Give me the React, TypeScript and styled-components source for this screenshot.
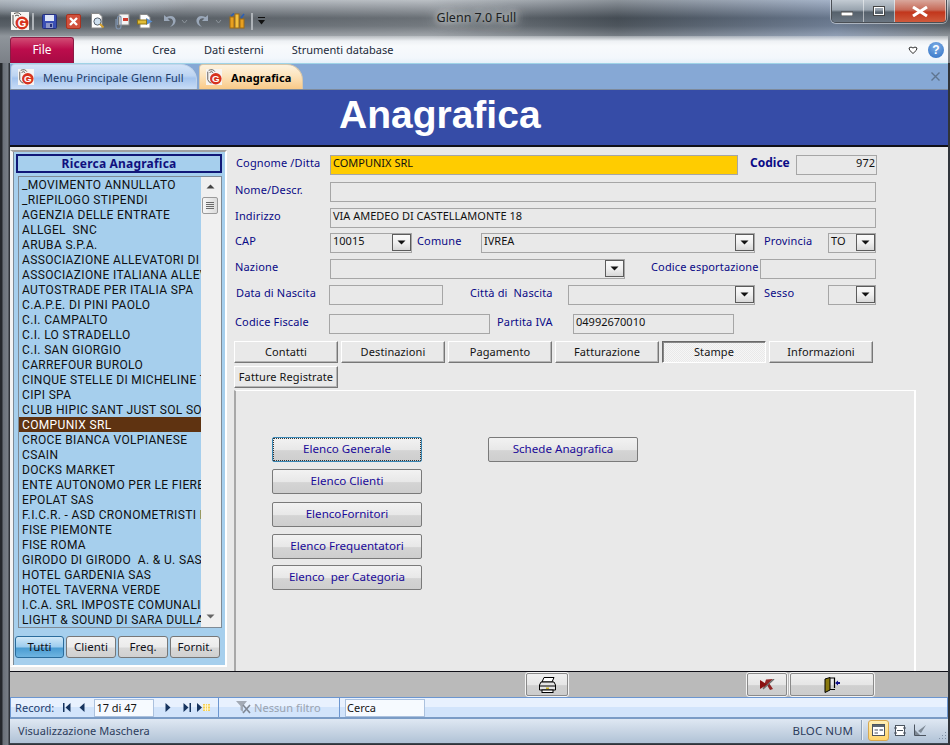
import styled, { createGlobalStyle } from "styled-components";

const GlobalStyle = createGlobalStyle`
  html, body { margin: 0; padding: 0; background: #33373c; }
  * { box-sizing: border-box; }
  body { font-family: "Noto Sans", "Liberation Sans", sans-serif; font-size: 11px; }
`;

const clients = [
  "_MOVIMENTO ANNULLATO", "_RIEPILOGO STIPENDI", "AGENZIA DELLE ENTRATE", "ALLGEL  SNC", "ARUBA S.P.A.",
  "ASSOCIAZIONE ALLEVATORI DI", "ASSOCIAZIONE ITALIANA ALLEV", "AUTOSTRADE PER ITALIA SPA", "C.A.P.E. DI PINI PAOLO",
  "C.I. CAMPALTO", "C.I. LO STRADELLO", "C.I. SAN GIORGIO", "CARREFOUR BUROLO", "CINQUE STELLE DI MICHELINE T",
  "CIPI SPA", "CLUB HIPIC SANT JUST SOL SOL", "COMPUNIX SRL", "CROCE BIANCA VOLPIANESE", "CSAIN", "DOCKS MARKET",
  "ENTE AUTONOMO PER LE FIERE", "EPOLAT SAS", "F.I.C.R. - ASD CRONOMETRISTI DI", "FISE PIEMONTE", "FISE ROMA",
  "GIRODO DI GIRODO  A. & U. SAS", "HOTEL GARDENIA SAS", "HOTEL TAVERNA VERDE", "I.C.A. SRL IMPOSTE COMUNALI DI",
  "LIGHT & SOUND DI SARA DULLA",
];

const Page = styled.div`
  width: 950px;
  height: 745px;
  overflow: hidden;
  display: flex;
  flex-direction: column;
  background: linear-gradient(90deg, #25282c 0, #25282c 2px, #6a7078 3px, #777d85 8px, #30343a 9px, #30343a 10px);
`;

const Chrome = styled.div`
  height: 63px;
  padding: 0 2px 0 10px;
  background:
    radial-gradient(ellipse 120px 14px at 70px 4px, rgba(200, 215, 230, 0.5), transparent),
    linear-gradient(90deg, transparent 0, rgba(255, 255, 255, 0.1) 30%, rgba(255, 255, 255, 0.16) 45%, rgba(40, 50, 60, 0.25) 65%, rgba(150, 180, 230, 0.35) 88%, transparent 100%),
    linear-gradient(180deg, #aeb4ba 0, #8e949b 6px, #4e555c 18px, #5a6168 26px, #8f959b 36px, #7b8087 63px);
`;

const TitleBar = styled.div`
  height: 36px;
  display: flex;
  align-items: flex-start;
  margin-right: 1px;
`;

const QuickBar = styled.div`
  width: 427px;
  height: 36px;
  padding: 6px 0 0 1px;
  display: flex;
  align-items: center;
  align-self: flex-start;
`;

const QuickSlot = styled.span<{ $w: number }>`
  width: ${(p) => p.$w}px;
  height: 20px;
  flex: none;
  display: flex;
  align-items: center;
  justify-content: center;
`;

const Title = styled.div`
  width: 395px;
  padding-top: 9px;
  color: #1c1f22;
  font-size: 12.5px;
  line-height: 18px;
  text-shadow: 0 0 6px #eceeef, 0 0 12px #e2e4e6, 0 0 18px #dadcde;
`;

const WinControls = styled.div`
  display: flex;
  width: 116px;
  height: 23px;
  border: 1px solid #4a4f55;
  border-top: 0;
  border-radius: 0 0 5px 5px;
  overflow: hidden;
  box-shadow: 0 0 0 1px rgba(255, 255, 255, 0.45);
`;

const WinButton = styled.span<{ $w: number; $close?: boolean }>`
  width: ${(p) => p.$w}px;
  display: flex;
  align-items: center;
  justify-content: center;
  border-right: 1px solid rgba(255, 255, 255, 0.5);
  background: ${(p) =>
    p.$close
      ? "linear-gradient(180deg, #d9a79c 0, #c66a58 45%, #c2361c 55%, #cf5a3c 100%)"
      : "linear-gradient(180deg, #c3cbd3 0, #98a3ae 45%, #56616c 55%, #6b7682 100%)"};
`;

const RibbonTabs = styled.div`
  height: 27px;
  display: flex;
  align-items: center;
  background: linear-gradient(180deg, rgba(216, 220, 223, 0.4) 0, #eef1f4 5px, #f8fafc 10px, #f3f7fc 22px, #e6f0f9 27px);
`;

const FileTab = styled.div`
  width: 64px;
  height: 26px;
  margin-top: 1px;
  border: 1px solid #8a1c44;
  border-bottom: 0;
  border-radius: 3px 3px 0 0;
  background: linear-gradient(180deg, #d24c74 0, #bc0d4c 45%, #a80a44 100%);
  color: #fff;
  font-size: 12px;
  display: flex;
  align-items: center;
  justify-content: center;
  padding-bottom: 3px;
`;

const RibbonTab = styled.span<{ $ml: number }>`
  margin-left: ${(p) => p.$ml}px;
  color: #222a3a;
  font-size: 11px;
`;

const RibbonRight = styled.div`
  margin-left: auto;
  margin-right: 4px;
  display: flex;
  align-items: center;
  gap: 10px;
`;

const Help = styled.span`
  width: 16px;
  height: 16px;
  border-radius: 50%;
  background: radial-gradient(circle at 50% 30%, #7eaee6, #2f70c4);
  color: #fff;
  font: bold 12px/16px "Liberation Sans", sans-serif;
  text-align: center;
`;

const Window = styled.div`
  flex: 1;
  margin-left: 10px;
  margin-right: 2px;
  margin-bottom: 1px;
  min-height: 0;
  display: flex;
  flex-direction: column;
  background: #e9e9e9;
`;

const DocTabs = styled.div`
  height: 27px;
  background: #86a8d5;
  border-top: 1px solid #9fd3e6;
  border-bottom: 1px solid #7d8a9c;
  display: flex;
  align-items: flex-end;
  padding-left: 1px;
  gap: 2px;
`;

const DocTab = styled.div<{ $active?: boolean; $w: number }>`
  width: ${(p) => p.$w}px;
  height: 25px;
  border: 1px solid ${(p) => (p.$active ? "#d8c6a8" : "#c2d4ea")};
  border-bottom: 0;
  border-radius: 4px 16px 0 0;
  padding-left: 6px;
  display: flex;
  align-items: center;
  gap: 9px;
  color: ${(p) => (p.$active ? "#000" : "#1e3a66")};
  font-weight: ${(p) => (p.$active ? 700 : 400)};
  font-size: 11px;
  letter-spacing: 0.1px;
  background: ${(p) =>
    p.$active
      ? "linear-gradient(180deg, #fdf2df 0, #fce4bd 45%, #f9c987 100%)"
      : "linear-gradient(180deg, #d4e4f8 0, #bcd4f2 45%, #a4c4ee 55%, #c8dcf6 100%)"};
`;

const DocClose = styled.span`
  margin-left: auto;
  margin-right: 8px;
  align-self: center;
  display: flex;
`;

const Banner = styled.div`
  height: 57px;
  background: #364ca7;
  border-bottom: 2px solid #101018;
  padding-left: 329px;
  color: #fff;
  font: bold 39px/50px "Liberation Sans", sans-serif;
`;

const Body = styled.div`
  flex: 1;
  min-height: 0;
  display: flex;
`;

const Sidebar = styled.div`
  width: 218px;
  padding: 3px 1px 4px 0;
  display: flex;
`;

const SidePanel = styled.div`
  width: 100%;
  padding: 2px 3px 0 3px;
  border: 2px solid #fff;
  border-left: 3px solid #f4f4f4;
  border-top-color: #a0a0a0;
  box-shadow: inset 1px 0 0 #7c8a96;
  background: #a6cfed;
  display: flex;
  flex-direction: column;
`;

const SideTitle = styled.div`
  height: 19px;
  margin: 0 0 3px 0;
  border: 2px solid #101878;
  color: #10107e;
  font-weight: 700;
  font-size: 12px;
  letter-spacing: 0.2px;
  line-height: 15px;
  text-align: center;
`;

const ListBox = styled.div`
  height: 452px;
  margin-left: 2px;
  border: 1px solid #7f8b96;
  display: flex;
  overflow: hidden;
`;

const ListRows = styled.div`
  flex: 1;
  min-width: 0;
  overflow: hidden;
`;

const ListRow = styled.div<{ $selected?: boolean }>`
  height: 15px;
  padding-left: 3px;
  font-family: Roboto, "Noto Sans", sans-serif;
  font-size: 12px;
  letter-spacing: 0.35px;
  line-height: 17px;
  white-space: pre;
  overflow: hidden;
  color: ${(p) => (p.$selected ? "#fff" : "#101010")};
  background: ${(p) => (p.$selected ? "#5f3311" : "transparent")};
`;

const Scrollbar = styled.div`
  width: 20px;
  background: #f0f0f0;
  display: flex;
  flex-direction: column;
  align-items: center;
  padding: 7px 2px 8px 0;
`;

const Thumb = styled.div`
  width: 16px;
  height: 17px;
  margin-top: 8px;
  margin-bottom: auto;
  border: 1px solid #9a9a9a;
  border-radius: 2px;
  background: linear-gradient(90deg, #f6f6f6, #dcdcdc);
  display: flex;
  flex-direction: column;
  align-items: center;
  justify-content: center;
  gap: 1px;
`;

const Grip = styled.i`
  width: 8px;
  height: 1px;
  background: #6a6a6a;
`;

const FilterRow = styled.div`
  margin-top: 8px;
  margin-left: -1px;
  display: flex;
  gap: 2px;
`;

const FilterButton = styled.div<{ $active?: boolean }>`
  width: ${(p) => (p.$active ? 49 : 50)}px;
  height: 22px;
  border: 1px solid ${(p) => (p.$active ? "#2a6c9c" : "#777")};
  border-radius: 3px;
  color: #101018;
  font-size: 11.5px;
  line-height: 19px;
  text-align: center;
  background: ${(p) =>
    p.$active
      ? "linear-gradient(180deg, #d0e8f8 0, #9cccee 50%, #4a9cd2 55%, #6fb4e0 100%)"
      : "linear-gradient(180deg, #f2f2f2 0, #ebebeb 50%, #d8d8d8 55%, #d0d0d0 100%)"};
`;

const Main = styled.div`
  flex: 1;
  min-width: 0;
  padding-top: 8px;
  padding-left: 7px;
  display: flex;
  flex-direction: column;
`;

const FormRow = styled.div<{ $mb: number }>`
  height: 20px;
  margin-bottom: ${(p) => p.$mb}px;
  display: flex;
  align-items: flex-start;
`;

const Label = styled.span<{ $w: number; $pl?: number; $bold?: boolean }>`
  width: ${(p) => p.$w}px;
  padding-left: ${(p) => p.$pl ?? 0}px;
  margin-top: -1px;
  flex: none;
  color: #0a0a86;
  font-size: ${(p) => (p.$bold ? 12 : 11)}px;
  letter-spacing: ${(p) => (p.$bold ? 0 : 0.15)}px;
  font-weight: ${(p) => (p.$bold ? 700 : 400)};
  line-height: 18px;
  white-space: pre;
`;

const Field = styled.div<{ $w: number; $fill?: string; $right?: boolean }>`
  width: ${(p) => p.$w}px;
  height: 20px;
  flex: none;
  position: relative;
  border: 1.5px solid #a6a6a6;
  background: ${(p) => p.$fill ?? "#e9e9e9"};
  color: #111;
  font-size: 11px;
  line-height: 14px;
  padding: 0 ${(p) => (p.$right ? "1px" : "2px")};
  text-align: ${(p) => (p.$right ? "right" : "left")};
  white-space: pre;
`;

const ComboArrow = styled.span`
  position: absolute;
  right: 0;
  top: 0;
  width: 19px;
  height: 17px;
  border: 1px solid #5c5c5c;
  background: linear-gradient(180deg, #fafafa 0, #f0f0f0 50%, #d8d8d8 100%);
  display: flex;
  align-items: center;
  justify-content: center;
`;

const TabGrid = styled.div`
  width: 660px;
  margin-left: -1px;
  display: flex;
  flex-wrap: wrap;
  gap: 3px;
`;

const TabButton = styled.div<{ $pressed?: boolean }>`
  width: 104px;
  height: 22px;
  font-size: 11px;
  letter-spacing: 0.1px;
  line-height: 19px;
  text-align: center;
  color: #141414;
  white-space: nowrap;
  background: #e9e9e9;
  border: 1px solid;
  border-color: ${(p) => (p.$pressed ? "#6a6a6a #fff #fff #6a6a6a" : "#fff #777 #777 #fff")};
  box-shadow: ${(p) => (p.$pressed ? "inset 1px 1px 0 #888" : "inset -1px -1px 0 #b5b5b5")};
  ${(p) => p.$pressed && "background: repeating-conic-gradient(#e9e9e9 0 25%, #f6f6f6 0 50%) 0 0 / 2px 2px;"}
`;

const Panel = styled.div`
  flex: 1;
  width: 682px;
  margin-top: 2px;
  margin-left: -1px;
  border-top: 1px solid #fff;
  border-left: 2px solid #a8a8a8;
  border-right: 2px solid #fff;
  padding: 46px 0 0 36px;
  display: flex;
  gap: 66px;
`;

const PanelCol = styled.div`
  width: 150px;
  display: flex;
  flex-direction: column;
`;

const PrintButton = styled.div<{ $focus?: boolean; $mb?: number }>`
  position: relative;
  width: 150px;
  height: 25px;
  margin-bottom: ${(p) => p.$mb ?? 0}px;
  border: 1px solid ${(p) => (p.$focus ? "#3a87b4" : "#7a7a7a")};
  border-radius: 2px;
  color: #1a0a98;
  font-size: 11.6px;
  line-height: 22px;
  text-align: center;
  white-space: pre;
  background: linear-gradient(180deg, #f2f2f2 0, #e8e8e8 50%, #d4d4d4 55%, #cecece 100%);
  ${(p) => p.$focus && "outline: 1px dotted #333; outline-offset: -2px;"}
`;

const CommandBar = styled.div`
  height: 26px;
  background: #bababa;
  border-top: 1px solid #101018;
  display: flex;
  padding-left: 515px;
`;

const CommandButton = styled.div<{ $w: number; $ml: number }>`
  width: ${(p) => p.$w}px;
  height: 25px;
  margin-left: ${(p) => p.$ml}px;
  border: 1px solid #f4f4f4;
  outline: 1px solid #8a8a8a;
  outline-offset: -2px;
  border-radius: 3px;
  background: linear-gradient(180deg, #f0f0f0 0, #e6e6e6 50%, #d0d0d0 55%, #cccccc 100%);
  display: flex;
  align-items: center;
  justify-content: center;
`;

const RecordBar = styled.div`
  height: 22px;
  border: 1px solid #6c96d0;
  border-bottom: 2px solid #7b9cc6;
  background: linear-gradient(180deg, #e8f1fe 0, #e8f1fe 45%, #d2e4fb 50%, #d2e4fb 100%);
  display: flex;
  align-items: center;
  color: #25406e;
`;

const RecSection = styled.div<{ $w: number; $pl: number }>`
  width: ${(p) => p.$w}px;
  height: 100%;
  padding-left: ${(p) => p.$pl}px;
  border-right: 1px solid #6c96d0;
  display: flex;
  align-items: center;
  flex: none;
`;

const RecText = styled.span<{ $muted?: boolean }>`
  font-size: 11px;
  letter-spacing: 0.05px;
  margin-right: 9px;
  color: ${(p) => (p.$muted ? "#9aa3b0" : "#25406e")};
`;

const RecInput = styled.div<{ $w: number; $ml?: number }>`
  width: ${(p) => p.$w}px;
  height: 18px;
  margin-left: ${(p) => p.$ml ?? 0}px;
  border: 1px solid #abc1de;
  background: #f6faff;
  color: #151515;
  font-size: 11px;
  line-height: 15px;
  padding-left: 1px;
`;

const NavIcon = styled.span<{ $w: number }>`
  width: ${(p) => p.$w}px;
  flex: none;
  display: flex;
  justify-content: center;
`;

const StatusBar = styled.div`
  height: 25px;
  padding: 0 0 2px 8px;
  border-bottom: 1px solid #3d4650;
  background: linear-gradient(180deg, #dfe8f3 0, #c8d5e4 50%, #b0c2d6 100%);
  display: flex;
  align-items: center;
  color: #2c3c5c;
  font-size: 11px;
  letter-spacing: 0.05px;
`;

const StatusRight = styled.div`
  margin-left: auto;
  display: flex;
  align-items: center;
  height: 100%;
  font-size: 11.5px;
`;

const ViewButton = styled.span<{ $active?: boolean }>`
  width: 21px;
  height: 21px;
  border: 1px solid ${(p) => (p.$active ? "#d8a850" : "transparent")};
  border-radius: 3px;
  background: ${(p) => (p.$active ? "linear-gradient(180deg, #fff0b8, #ffd56c)" : "transparent")};
  display: flex;
  align-items: center;
  justify-content: center;
`;

const StatusDivider = styled.i`
  width: 2px;
  height: 20px;
  margin: 0 5px 0 8px;
  background: #8fa2b8;
  border-right: 1px solid #e8eef5;
`;

const GripCorner = styled.span`
  margin: auto 1px 0 6px;
  display: flex;
`;

const Arrow = ({ color = "#111", up = false }: { color?: string; up?: boolean }) => (
  <svg width="9" height="5" viewBox="0 0 9 5">
    <path d={up ? "M4.5 0.5 L8.5 4.5 H0.5Z" : "M0.5 0.5 H8.5 L4.5 4.5Z"} fill={color} />
  </svg>
);

const AppIcon = ({ size = 18 }: { size?: number }) => (
  <svg width={size} height={size} viewBox="0 0 18 18">
    <rect width="18" height="18" fill="#f6f4f2" />
    <path d="M3 1.5 Q8 -0.5 10 3 M2 3 L2 12 Q3 15 6 16 M4 4 Q6 2 8 4" fill="none" stroke="#55504c" strokeWidth="1" />
    <circle cx="11" cy="11" r="6.5" fill="#d6321e" />
    <text x="11" y="15" textAnchor="middle" fontSize="11" fontWeight="700" fontFamily="Liberation Sans" fill="#fff">G</text>
  </svg>
);

const Drop = () => (
  <svg width="7" height="5" viewBox="0 0 7 5">
    <path d="M1 1 L3.5 4 L6 1" fill="none" stroke="#8d949b" />
  </svg>
);

const SaveIcon = () => (
  <svg width="15" height="15" viewBox="0 0 15 15">
    <rect x="0.5" y="0.5" width="14" height="14" rx="1" fill="#3a4fb5" stroke="#26307a" />
    <rect x="3" y="1" width="9" height="6" fill="#dfe6f7" />
    <rect x="4" y="9" width="7" height="5" fill="#8c96c8" />
    <rect x="8" y="10" width="2" height="3" fill="#26307a" />
  </svg>
);

const CloseIcon = () => (
  <svg width="15" height="15" viewBox="0 0 15 15">
    <rect x="0.5" y="0.5" width="14" height="14" rx="1.5" fill="#d0503c" stroke="#a8321f" />
    <path d="M4 4 L11 11 M11 4 L4 11" stroke="#fff" strokeWidth="2.4" />
  </svg>
);

const PreviewIcon = () => (
  <svg width="15" height="16" viewBox="0 0 15 16">
    <path d="M1.5 0.5 H9 L12 3.5 V15 H1.5Z" fill="#fff" stroke="#8a8a8a" />
    <circle cx="7.5" cy="8.5" r="3.6" fill="#cfe0ef" stroke="#56606c" />
    <path d="M10 11 L13.5 14.5" stroke="#d4a030" strokeWidth="2" />
  </svg>
);

const AttachIcon = () => (
  <svg width="17" height="17" viewBox="0 0 17 17">
    <rect x="6" y="1" width="10" height="11" fill="#f4f4f4" stroke="#8a8a8a" />
    <rect x="10" y="5" width="5" height="3" fill="#cc3b2e" />
    <path d="M3 6 V13 Q3 16 5.5 16 Q8 16 8 13 V5 Q8 3 6 3 Q4.5 3 4.5 5 V12" fill="none" stroke="#7f93ad" strokeWidth="1.2" />
  </svg>
);

const ExportIcon = () => (
  <svg width="16" height="15" viewBox="0 0 16 15">
    <path d="M3 0.5 H10 L13 3.5 V14 H3Z" fill="#fff" stroke="#8a8a8a" />
    <path d="M9 4 L15.5 7.5 L9 11Z" fill="#5b8fd0" />
    <rect x="0.5" y="6" width="9" height="4" fill="#e0bc36" stroke="#8f7415" />
  </svg>
);

const UndoIcon = ({ flip = false }: { flip?: boolean }) => (
  <svg width="13" height="14" viewBox="0 0 13 14" style={flip ? { transform: "scaleX(-1)" } : undefined}>
    <path d="M1 1 V7 H7 L4.6 4.6 Q9 3 10 7 Q10.4 10 7 13 Q13 11 12.6 6 Q11 0 3.4 3Z" fill="#9aa7b8" />
  </svg>
);

const RelationIcon = () => (
  <svg width="16" height="16" viewBox="0 0 16 16">
    <rect x="1" y="4" width="4" height="11" fill="#e8a020" stroke="#a06a10" />
    <rect x="6" y="1" width="4" height="14" fill="#f2c040" stroke="#a06a10" />
    <rect x="11" y="6" width="4" height="9" fill="#e8a020" stroke="#a06a10" />
    <path d="M2 3 L5 0.5 M12 5 L15 1" stroke="#2c5fb4" strokeWidth="1.6" />
  </svg>
);

const QuickSep = () => <svg width="2" height="17" viewBox="0 0 2 17"><rect width="2" height="17" fill="#aeb3b8" /></svg>;

const QuickMore = () => (
  <svg width="7" height="8" viewBox="0 0 7 8">
    <rect y="0" width="7" height="1" fill="#111" />
    <path d="M0 3 H7 L3.5 7.5Z" fill="#111" />
  </svg>
);

const NavGlyph = ({ kind }: { kind: "first" | "prev" | "next" | "last" | "new" }) => (
  <svg width={kind === "new" ? 14 : 8} height="9" viewBox={kind === "new" ? "0 0 14 9" : "0 0 8 9"}>
    {kind === "first" && <path d="M0 0 H1.5 V9 H0Z M7.5 0 V9 L2.5 4.5Z" fill="#16345f" />}
    {kind === "prev" && <path d="M6.5 0 V9 L1.5 4.5Z" fill="#16345f" />}
    {kind === "next" && <path d="M1.5 0 V9 L6.5 4.5Z" fill="#16345f" />}
    {kind === "last" && <path d="M0.5 0 V9 L5.5 4.5Z M6.5 0 H8 V9 H6.5Z" fill="#16345f" />}
    {kind === "new" && (
      <>
        <path d="M0 0 V9 L5 4.5Z" fill="#16345f" />
        <rect x="6" y="1" width="7" height="7" fill="#f4cf58" />
        <path d="M6 3 H13 M6 6 H13 M8.5 1 V8 M10.5 1 V8" stroke="#fff6cc" strokeWidth="1" />
      </>
    )}
  </svg>
);

const FilterIcon = () => (
  <svg width="15" height="13" viewBox="0 0 15 13">
    <path d="M0 0 H11 L7 5 V11 L4.5 9 V5Z" fill="#a3aab5" />
    <path d="M7 4 L14 12 M14 4 L7 12" stroke="#7f8794" strokeWidth="1.6" />
  </svg>
);

const PrinterIcon = () => (
  <svg width="17" height="16" viewBox="0 0 17 16">
    <path d="M5 0.5 H15 L13 5 H3Z" fill="#fff" stroke="#000" />
    <path d="M2 5 H15 L16.5 8 V13 H0.5 V8Z" fill="#e4e4e4" stroke="#000" />
    <path d="M1 9 H16" stroke="#000" />
    <rect x="3" y="13" width="11" height="2.5" fill="#fff" stroke="#000" />
    <rect x="7" y="10.5" width="3" height="1.5" fill="#c8b020" />
  </svg>
);

const UndoRecordIcon = () => (
  <svg width="15" height="11" viewBox="0 0 15 11">
    <path d="M0 1 L7 5.5 L0 10Z" fill="#8a1010" />
    <path d="M6 0.5 L13 0 L9 4 L13 10 L10 11 L7 6 L3 10 Z" fill="#8a1010" opacity="0.9" />
    <path d="M3 10 L14 0" stroke="#6c6c6c" strokeWidth="1.4" />
  </svg>
);

const DoorIcon = () => (
  <svg width="16" height="16" viewBox="0 0 16 16">
    <path d="M1 2 L6 0.5 V13 L1 15.5Z" fill="#8a7a10" stroke="#000" />
    <path d="M6 1 H10.5 V11 M6 12.5 H11" fill="none" stroke="#000" strokeWidth="1.2" />
    <path d="M11 6 L14 3.5 V5 H16 V7 H14 V8.5Z" fill="#10108a" />
  </svg>
);

const FormViewIcon = () => (
  <svg width="13" height="12" viewBox="0 0 13 12">
    <rect x="0.5" y="0.5" width="12" height="11" fill="#fff" stroke="#4c5560" />
    <rect x="1" y="1" width="11" height="2" fill="#5c6670" />
    <path d="M2.5 6 H6 M2.5 9 H6" stroke="#4c5560" />
    <rect x="7.5" y="5" width="3.5" height="2" fill="#8a94a0" />
  </svg>
);

const LayoutIcon = () => (
  <svg width="12" height="11" viewBox="0 0 12 11">
    <rect x="1.5" y="0.5" width="9" height="10" fill="#fff" stroke="#4c5560" />
    <path d="M0 3 H3 M0 8 H3 M9 3 H12 M9 8 H12 M3 5.5 H9" stroke="#4c5560" />
  </svg>
);

const DesignIcon = () => (
  <svg width="13" height="12" viewBox="0 0 13 12">
    <path d="M0.5 0.5 V11.5 H12" fill="none" stroke="#4c5560" />
    <path d="M1 11 L1 6 L6 11Z M4 7 L12 1 L7 9Z" fill="#7d8894" />
  </svg>
);

const ResizeGrip = () => (
  <svg width="10" height="10" viewBox="0 0 10 10">
    <path d="M8 1h1v1H8z M5 4h1v1H5z M8 4h1v1H8z M2 7h1v1H2z M5 7h1v1H5z M8 7h1v1H8z" fill="#7e90a4" />
  </svg>
);

const Combo = ({ w, value }: { w: number; value?: string }) => (
  <Field $w={w}>
    {value}
    <ComboArrow>
      <Arrow />
    </ComboArrow>
  </Field>
);

export default function App() {
  const tabs = ["Contatti", "Destinazioni", "Pagamento", "Fatturazione", "Stampe", "Informazioni", "Fatture Registrate"];
  return (
    <Page>
      <GlobalStyle />
      <Chrome>
        <TitleBar>
          <QuickBar>
            <QuickSlot $w={18}><AppIcon /></QuickSlot>
            <QuickSlot $w={8}><QuickSep /></QuickSlot>
            <QuickSlot $w={25}><SaveIcon /></QuickSlot>
            <QuickSlot $w={22}><CloseIcon /></QuickSlot>
            <QuickSlot $w={27}><PreviewIcon /></QuickSlot>
            <QuickSlot $w={20}><AttachIcon /></QuickSlot>
            <QuickSlot $w={28}><ExportIcon /></QuickSlot>
            <QuickSlot $w={20}><UndoIcon /></QuickSlot>
            <QuickSlot $w={11}><Drop /></QuickSlot>
            <QuickSlot $w={24}><UndoIcon flip /></QuickSlot>
            <QuickSlot $w={9}><Drop /></QuickSlot>
            <QuickSlot $w={27}><RelationIcon /></QuickSlot>
            <QuickSlot $w={4}><QuickSep /></QuickSlot>
            <QuickSlot $w={15}><QuickMore /></QuickSlot>
          </QuickBar>
          <Title>Glenn 7.0 Full</Title>
          <WinControls>
            <WinButton $w={32}>
              <svg width="12" height="10" viewBox="0 0 12 10"><rect y="6" width="12" height="4" fill="#fff" stroke="#444" /></svg>
            </WinButton>
            <WinButton $w={32}>
              <svg width="12" height="10" viewBox="0 0 12 10"><rect x="1" y="1" width="10" height="8" fill="none" stroke="#fff" strokeWidth="2" /><rect x="0.5" y="0.5" width="11" height="9" fill="none" stroke="#444" /></svg>
            </WinButton>
            <WinButton $w={52} $close>
              <svg width="18" height="11" viewBox="0 0 18 11"><path d="M2 1 L16 10 M16 1 L2 10" stroke="#fff" strokeWidth="3" /></svg>
            </WinButton>
          </WinControls>
        </TitleBar>
        <RibbonTabs>
          <FileTab>File</FileTab>
          <RibbonTab $ml={17}>Home</RibbonTab>
          <RibbonTab $ml={30}>Crea</RibbonTab>
          <RibbonTab $ml={28}>Dati esterni</RibbonTab>
          <RibbonTab $ml={28}>Strumenti database</RibbonTab>
          <RibbonRight>
            <svg width="10" height="8" viewBox="0 0 10 8"><path d="M1 2 Q3 0 5 2 Q7 0 9 2 Q9.5 4 5 7.5 Q0.5 4 1 2Z" fill="#fff" stroke="#333" /></svg>
            <Help>?</Help>
          </RibbonRight>
        </RibbonTabs>
      </Chrome>
      <Window>
        <DocTabs>
          <DocTab $w={186}>
            <AppIcon size={16} />
            Menu Principale Glenn Full
          </DocTab>
          <DocTab $w={104} $active>
            <AppIcon size={16} />
            Anagrafica
          </DocTab>
          <DocClose>
            <svg width="9" height="9" viewBox="0 0 9 9"><path d="M0.5 0.5 L8.5 8.5 M8.5 0.5 L0.5 8.5" stroke="#5f7590" strokeWidth="1.4" /></svg>
          </DocClose>
        </DocTabs>
        <Banner>Anagrafica</Banner>
        <Body>
          <Sidebar>
            <SidePanel>
              <SideTitle>Ricerca Anagrafica</SideTitle>
              <ListBox>
                <ListRows>
                  {clients.map((name) => (
                    <ListRow key={name} $selected={name === "COMPUNIX SRL"}>{name}</ListRow>
                  ))}
                </ListRows>
                <Scrollbar>
                  <Arrow color="#444" up />
                  <Thumb><Grip /><Grip /><Grip /><Grip /></Thumb>
                  <Arrow color="#666" />
                </Scrollbar>
              </ListBox>
              <FilterRow>
                <FilterButton $active>Tutti</FilterButton>
                <FilterButton>Clienti</FilterButton>
                <FilterButton>Freq.</FilterButton>
                <FilterButton>Fornit.</FilterButton>
              </FilterRow>
            </SidePanel>
          </Sidebar>
          <Main>
            <FormRow $mb={7}>
              <Label $w={95} $pl={1}>Cognome /Ditta</Label>
              <Field $w={408} $fill="#ffcc00">COMPUNIX SRL</Field>
              <Label $w={58} $pl={12} $bold>Codice</Label>
              <Field $w={81} $right>972</Field>
            </FormRow>
            <FormRow $mb={6}>
              <Label $w={95}>Nome/Descr.</Label>
              <Field $w={546} />
            </FormRow>
            <FormRow $mb={5}>
              <Label $w={95}>Indirizzo</Label>
              <Field $w={546}>VIA AMEDEO DI CASTELLAMONTE 18</Field>
            </FormRow>
            <FormRow $mb={6}>
              <Label $w={95}>CAP</Label>
              <Combo w={82} value="10015" />
              <Label $w={69} $pl={5}>Comune</Label>
              <Combo w={274} value="IVREA" />
              <Label $w={73} $pl={9}>Provincia</Label>
              <Combo w={48} value="TO" />
            </FormRow>
            <FormRow $mb={6}>
              <Label $w={95}>Nazione</Label>
              <Combo w={295} />
              <Label $w={135} $pl={26}>Codice esportazione</Label>
              <Field $w={116} />
            </FormRow>
            <FormRow $mb={9}>
              <Label $w={94} $pl={1}>Data di Nascita</Label>
              <Field $w={114} />
              <Label $w={125} $pl={27}>Città di  Nascita</Label>
              <Combo w={187} />
              <Label $w={73} $pl={9}>Sesso</Label>
              <Combo w={48} />
            </FormRow>
            <FormRow $mb={7}>
              <Label $w={94}>Codice Fiscale</Label>
              <Field $w={161} />
              <Label $w={83} $pl={7}>Partita IVA</Label>
              <Field $w={161}>04992670010</Field>
            </FormRow>
            <TabGrid>
              {tabs.map((t) => (
                <TabButton key={t} $pressed={t === "Stampe"}>{t}</TabButton>
              ))}
            </TabGrid>
            <Panel>
              <PanelCol>
                <PrintButton $focus $mb={7}>Elenco Generale</PrintButton>
                <PrintButton $mb={8}>Elenco Clienti</PrintButton>
                <PrintButton $mb={7}>ElencoFornitori</PrintButton>
                <PrintButton $mb={6}>Elenco Frequentatori</PrintButton>
                <PrintButton>Elenco  per Categoria</PrintButton>
              </PanelCol>
              <PanelCol>
                <PrintButton>Schede Anagrafica</PrintButton>
              </PanelCol>
            </Panel>
          </Main>
        </Body>
        <CommandBar>
          <CommandButton $w={44} $ml={0}><PrinterIcon /></CommandButton>
          <CommandButton $w={42} $ml={177}><UndoRecordIcon /></CommandButton>
          <CommandButton $w={86} $ml={1}><DoorIcon /></CommandButton>
        </CommandBar>
        <RecordBar>
          <RecSection $w={208} $pl={4}>
            <RecText>Record:</RecText>
            <NavIcon $w={8}><NavGlyph kind="first" /></NavIcon>
            <NavIcon $w={22}><NavGlyph kind="prev" /></NavIcon>
            <RecInput $w={60} $ml={1}>17 di 47</RecInput>
            <NavIcon $w={28}><NavGlyph kind="next" /></NavIcon>
            <NavIcon $w={10}><NavGlyph kind="last" /></NavIcon>
            <NavIcon $w={24}><NavGlyph kind="new" /></NavIcon>
          </RecSection>
          <RecSection $w={121} $pl={13}>
            <NavIcon $w={22}><FilterIcon /></NavIcon>
            <RecText $muted>Nessun filtro</RecText>
          </RecSection>
          <RecInput $w={80} $ml={5}>Cerca</RecInput>
        </RecordBar>
        <StatusBar>
          Visualizzazione Maschera
          <StatusRight>
            BLOC NUM
            <StatusDivider />
            <ViewButton $active><FormViewIcon /></ViewButton>
            <ViewButton><LayoutIcon /></ViewButton>
            <ViewButton><DesignIcon /></ViewButton>
            <GripCorner><ResizeGrip /></GripCorner>
          </StatusRight>
        </StatusBar>
      </Window>
    </Page>
  );
}
